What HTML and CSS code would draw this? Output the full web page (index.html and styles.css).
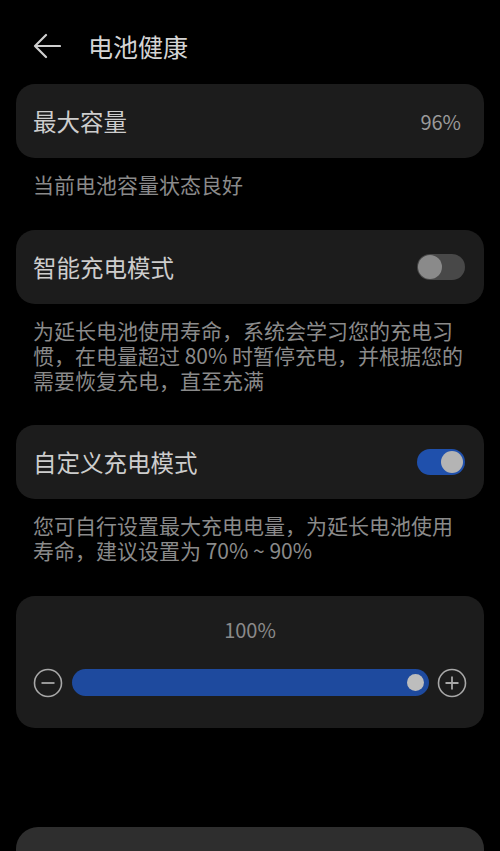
FILE: index.html
```html
<!DOCTYPE html>
<html lang="zh-CN">
<head>
<meta charset="utf-8">
<title>电池健康</title>
<link rel="stylesheet" href="styles.css">
</head>
<body>
<div class="page">
  <header class="header">
    <svg class="back" width="28" height="28" viewBox="0 0 28 28">
      <path d="M27 14 H2 M13 3 L2 14 L13 25" fill="none" stroke="#cfcfcf" stroke-width="2.2" stroke-linecap="round" stroke-linejoin="round"/>
    </svg>
    <h1 class="title">电池健康</h1>
  </header>

  <div class="card row">
    <span class="label">最大容量</span>
    <span class="value">96%</span>
  </div>
  <p class="desc">当前电池容量状态良好</p>

  <div class="card row">
    <span class="label">智能充电模式</span>
    <span class="toggle"><span class="knob"></span></span>
  </div>
  <p class="desc">为延长电池使用寿命，系统会学习您的充电习惯，在电量超过 80% 时暂停充电，并根据您的需要恢复充电，直至充满</p>

  <div class="card row">
    <span class="label">自定义充电模式</span>
    <span class="toggle on"><span class="knob"></span></span>
  </div>
  <p class="desc">您可自行设置最大充电电量，为延长电池使用寿命，建议设置为 70% ~ 90%</p>

  <div class="card slider-card">
    <div class="slider-value">100%</div>
    <div class="slider-row">
      <svg class="step" width="30" height="30" viewBox="0 0 30 30">
        <circle cx="15" cy="15" r="13.5" fill="none" stroke="#a8a8a8" stroke-width="1.6"/>
        <path d="M8.5 15 H21.5" stroke="#a8a8a8" stroke-width="1.8"/>
      </svg>
      <div class="bar"><span class="thumb"></span></div>
      <svg class="step" width="30" height="30" viewBox="0 0 30 30">
        <circle cx="15" cy="15" r="13.5" fill="none" stroke="#a8a8a8" stroke-width="1.6"/>
        <path d="M8.5 15 H21.5 M15 8.5 V21.5" stroke="#a8a8a8" stroke-width="1.8"/>
      </svg>
    </div>
  </div>

  <div class="card bottom-card"></div>
</div>
</body>
</html>
```

FILE: styles.css
```css
html, body {
  margin: 0;
  padding: 0;
  background: #000;
}

body {
  font-family: "Noto Sans CJK SC", "Noto Sans", sans-serif;
  color: #d0d0d0;
}

.page {
  display: flex;
  flex-direction: column;
  padding: 0 16px;
}

.header {
  display: flex;
  align-items: center;
  height: 76px;
  margin-top: 8px;
}

.back {
  margin-left: 17px;
  margin-right: 27px;
}

.title {
  margin: 0;
  font-size: 25px;
  font-weight: 400;
  color: #d4d4d4;
  line-height: 32px;
}

.card {
  background: #1c1c1c;
  border-radius: 19px;
}

.row {
  height: 74px;
  display: flex;
  align-items: center;
  justify-content: space-between;
  padding: 0 19px 0 17px;
}

.label {
  font-size: 23.5px;
  color: #cdcdcd;
  line-height: 30px;
}

.value {
  font-size: 20px;
  color: #9a9a9a;
  margin-right: 4px;
}

.desc {
  margin: 14px 0 32.5px;
  padding: 0 14px 0 17px;
  font-size: 21px;
  line-height: 25px;
  color: #8a8a8a;
}

.toggle {
  position: relative;
  width: 48px;
  height: 26px;
  border-radius: 13px;
  background: #484848;
  flex-shrink: 0;
}

.toggle .knob {
  position: absolute;
  top: 1px;
  left: 1px;
  width: 24px;
  height: 24px;
  border-radius: 50%;
  background: #8a8a8a;
}

.toggle.on {
  background: #1f50ac;
}

.toggle.on .knob {
  left: auto;
  right: 2px;
  top: 2px;
  width: 22px;
  height: 22px;
  background: #b4b4b4;
}

.slider-card {
  height: 132px;
  box-sizing: border-box;
  padding: 22px 17px 0 17px;
  display: flex;
  flex-direction: column;
}

.slider-value {
  text-align: center;
  font-size: 20px;
  line-height: 24px;
  color: #8a8a8a;
}

.slider-row {
  margin-top: 26px;
  display: flex;
  align-items: center;
  height: 30px;
}

.step {
  flex-shrink: 0;
}

.slider-row .step:first-child {
  margin-right: 9px;
}

.slider-row .step:last-child {
  margin-left: 8px;
}

.bar {
  position: relative;
  flex: 1;
  height: 27px;
  border-radius: 14px;
  background: #1e4a9e;
}

.thumb {
  position: absolute;
  right: 5px;
  top: 5px;
  width: 17px;
  height: 17px;
  border-radius: 50%;
  background: #bdbdbd;
}

.bottom-card {
  margin-top: 99px;
  height: 80px;
  background: #2e2e2e;
  border-radius: 22px;
}
```
